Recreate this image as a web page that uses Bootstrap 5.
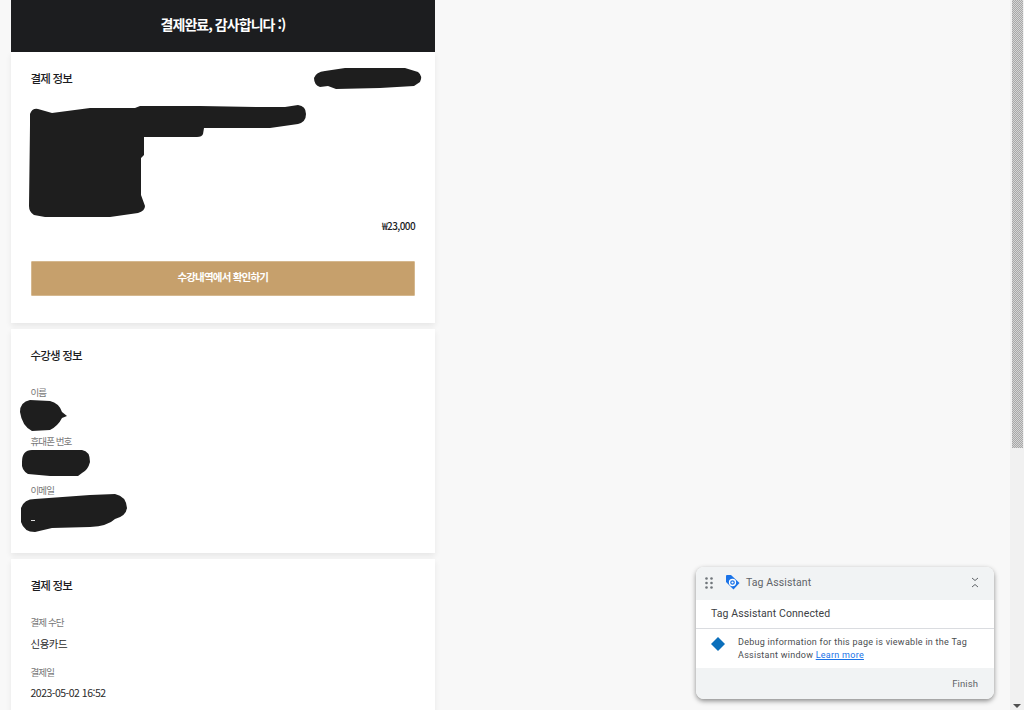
<!DOCTYPE html>
<html lang="ko">
<head>
  <meta charset="UTF-8" />
  <meta name="viewport" content="width=device-width, initial-scale=1.0" />
  <title>결제완료</title>
  <link href="https://cdn.jsdelivr.net/npm/bootstrap@5.3.3/dist/css/bootstrap.min.css" rel="stylesheet" />
  <style>
    html, body { height: 710px; overflow: hidden; }
    body { background: #f8f8f8; font-family: "Noto Sans CJK KR", "Noto Sans", sans-serif; color: #1c1d1f; letter-spacing: -0.5px; }
    .page-wrap { height: 710px; }
    .page-col { width: 424px; margin-left: 11px; flex: none; }
    .done-head { height: 52px; padding-bottom: 4px; background: #1c1d1f; color: #fff; font-size: 14px; font-weight: 700; letter-spacing: -0.95px; }
    .info-box { background: #fff; box-shadow: 0 3px 6px rgba(0, 0, 0, .07); padding: 18px 20px 0 19.5px; margin-bottom: 6px; }
    .box-title { font-size: 11.5px; font-weight: 500; line-height: 16px; margin: 0; letter-spacing: -0.8px; }
    .thumb-space { height: 116px; margin-top: 17px; }
    .price { font-size: 10px; font-weight: 500; line-height: 14px; letter-spacing: -0.6px; }
    .go-btn { height: 35px; margin-top: 28px; padding: 0 0 3px; background: #c6a06c; border: 1px solid #d5b88f; border-radius: 1px; color: #fff; font-size: 10.5px; font-weight: 700; letter-spacing: -0.8px; width: 100%; }
    .field-label { font-size: 9.5px; line-height: 13px; color: #777; letter-spacing: -0.9px; }
    .field-value { font-size: 10.5px; line-height: 14px; color: #2a2a2a; margin-top: 8px; }
    .date-value { margin-top: 7px; }
    .first-label { margin-top: 23px; }
    .next-label { margin-top: 15px; }
    .blob-gap { height: 36px; }
    .box-one { height: 271px; }
    .box-two { height: 224px; }
    .box-three { height: 170px; }
    .scrollbar-col { width: 14px; padding: 0 1.5px 2px 2px; background: #f1f1f1; flex: none; }
    .scrollbar-thumb { height: 448px; background: repeating-conic-gradient(#a8a8a8 0 25%, #d4d4d4 0 50%) 0 0 / 2px 2px; }
    .scrollbar-arrow { width: 0; height: 0; border-left: 4px solid transparent; border-right: 4px solid transparent; border-top: 4px solid #505050; margin: 0 auto; }
    .redactions { position: absolute; left: 0; top: 0; }
    .tag-panel { position: absolute; left: 696px; top: 567px; width: 298px; height: 132px; border-radius: 8px; background: #fff; box-shadow: 0 2px 5px rgba(0, 0, 0, .45); overflow: hidden; font-family: Roboto, "Liberation Sans", sans-serif; letter-spacing: 0; }
    .tag-head { height: 33px; background: #f1f3f4; color: #5f6368; font-size: 10.5px; padding: 0 15px 2px 9px; letter-spacing: .1px; }
    .tag-logo { margin-left: 12px; }
    .tag-name { margin-left: 6px; }
    .tag-title { height: 29px; padding: 0 0 1px 15px; font-size: 10.5px; color: #3c4043; border-bottom: 1px solid #dadce0; letter-spacing: .1px; }
    .tag-msg { height: 39px; padding: 7px 10px 0 15px; font-size: 9px; line-height: 13px; color: #4a4d50; letter-spacing: .27px; }
    .tag-msg a { color: #1a73e8; }
    .tag-diamond { flex: none; margin: 1px 13px 0 0; }
    .tag-foot { height: 31px; background: #f1f3f4; color: #5f6368; font-size: 9.5px; padding: 1px 16px 0 0; letter-spacing: .1px; }
  </style>
</head>
<body>
  <div class="page-wrap d-flex justify-content-between">
    <div class="page-col">
      <div class="done-head d-flex align-items-center justify-content-center">결제완료, 감사합니다 :)</div>

      <div class="info-box box-one">
        <p class="box-title">결제 정보</p>
        <div class="thumb-space"></div>
        <div class="price text-end">₩23,000</div>
        <button type="button" class="btn go-btn">수강내역에서 확인하기</button>
      </div>

      <div class="info-box box-two">
        <p class="box-title">수강생 정보</p>
        <div class="field-label first-label">이름</div>
        <div class="blob-gap"></div>
        <div class="field-label">휴대폰 번호</div>
        <div class="blob-gap"></div>
        <div class="field-label">이메일</div>
      </div>

      <div class="info-box box-three">
        <p class="box-title">결제 정보</p>
        <div class="field-label first-label">결제 수단</div>
        <div class="field-value">신용카드</div>
        <div class="field-label next-label">결제일</div>
        <div class="field-value date-value">2023-05-02 16:52</div>
      </div>
    </div>

    <div class="scrollbar-col d-flex flex-column justify-content-between">
      <div class="scrollbar-thumb"></div>
      <div class="scrollbar-arrow"></div>
    </div>
  </div>

  <!-- hand-drawn redactions from the screenshot -->
  <svg class="redactions" width="1024" height="710" viewBox="0 0 1024 710">
    <g fill="#1e1e1e">
      <path d="M314 78Q316 72 325 71L345 68H405L418 72Q423 76 420 82L414 86L380 88L336 89L328 86L320 87Q314 85 314 78Z"/>
      <path d="M30 114Q32 108 38 109L52 113L90 108H135L140 106H200L260 107H285L298 105Q306 106 306 114Q306 122 298 124L270 128H204L203 134Q202 137 197 137H144V155L141 158V195L145 206Q145 211 138 213L110 217H45L34 215Q29 212 29 206L30 125Z"/>
      <path d="M20 412Q20 402 30 400L50 401Q59 403 62 412L67 416L62 418Q58 426 50 430L32 431Q22 426 20 412Z"/>
      <path d="M22 462Q22 450 32 450H82Q90 451 90 462Q88 470 82 473L78 476H50L28 474Q21 470 22 462Z"/>
      <path d="M21 508Q24 499 35 499L90 495L115 494Q126 496 127 508Q126 516 115 519Q108 526 90 527L52 528L35 532Q24 532 21 522Z"/>
    </g>
    <rect x="31" y="520" width="4" height="1" fill="#ddd"/>
  </svg>

  <div class="tag-panel d-flex flex-column">
    <div class="tag-head d-flex align-items-center">
      <svg width="8" height="12" viewBox="0 0 8 12" fill="#70757a"><circle cx="1.5" cy="1.5" r="1.3"/><circle cx="6.5" cy="1.5" r="1.3"/><circle cx="1.5" cy="6" r="1.3"/><circle cx="6.5" cy="6" r="1.3"/><circle cx="1.5" cy="10.5" r="1.3"/><circle cx="6.5" cy="10.5" r="1.3"/></svg>
      <svg class="tag-logo" width="15" height="15" viewBox="0 0 15 15"><path fill="#1a73e8" d="M1.5 0H6L14.5 8 8.5 14.5 1 7V1z"/><circle cx="7.5" cy="7.5" r="3" fill="none" stroke="#fff" stroke-width="1.3"/><circle cx="7.5" cy="7.5" r="1.1" fill="#fff"/></svg>
      <span class="tag-name">Tag Assistant</span>
      <svg class="ms-auto" width="8" height="11" viewBox="0 0 8 11" fill="none" stroke="#5f6368" stroke-width="1"><path d="M1 1l3 2.5L7 1M1 10l3-2.5L7 10"/></svg>
    </div>
    <div class="tag-title d-flex align-items-center">Tag Assistant Connected</div>
    <div class="tag-msg d-flex">
      <svg class="tag-diamond" width="14" height="14" viewBox="0 0 14 14"><path fill="#0b6fbb" d="M7 0l7 7-7 7-7-7z"/></svg>
      <div>Debug information for this page is viewable in the Tag Assistant window <a href="#">Learn more</a></div>
    </div>
    <div class="tag-foot d-flex align-items-center justify-content-end">Finish</div>
  </div>

  <script src="https://cdn.jsdelivr.net/npm/bootstrap@5.3.3/dist/js/bootstrap.bundle.min.js"></script>
</body>
</html>
